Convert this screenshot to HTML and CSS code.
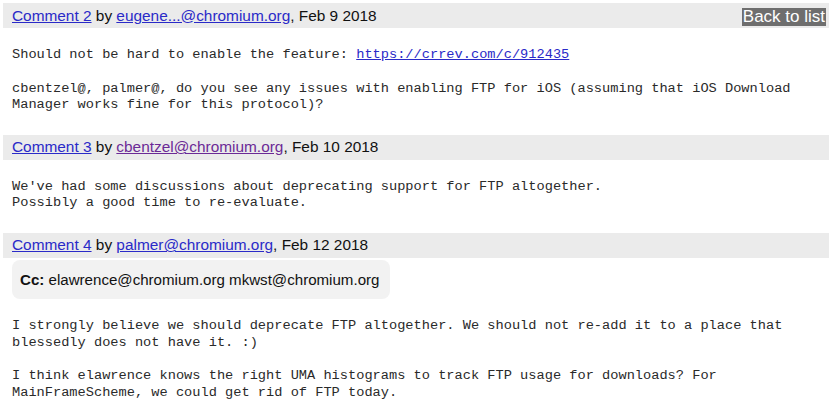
FILE: index.html
```html
<!DOCTYPE html>
<html>
<head>
<meta charset="utf-8">
<link rel="stylesheet" href="styles.css">
</head>
<body>
<div class="thread">
  <div class="comment">
    <div class="header">
      <div class="meta"><a class="link" href="#c2">Comment 2</a> by <a class="link" href="#u1">eugene...@chromium.org</a>, Feb 9 2018</div>
      <a class="back" href="#list">Back to list</a>
    </div>
    <pre class="body">Should not be hard to enable the feature: <a class="code-link" href="#crrev">https://crrev.com/c/912435</a>

cbentzel@, palmer@, do you see any issues with enabling FTP for iOS (assuming that iOS Download
Manager works fine for this protocol)?</pre>
  </div>
  <div class="comment">
    <div class="header">
      <div class="meta"><a class="link" href="#c3">Comment 3</a> by <a class="link visited" href="#u2">cbentzel@chromium.org</a>, Feb 10 2018</div>
    </div>
    <pre class="body">We've had some discussions about deprecating support for FTP altogether.
Possibly a good time to re-evaluate.</pre>
  </div>
  <div class="comment">
    <div class="header">
      <div class="meta"><a class="link" href="#c4">Comment 4</a> by <a class="link" href="#u3">palmer@chromium.org</a>, Feb 12 2018</div>
    </div>
    <div class="cc"><b>Cc:</b> elawrence@chromium.org mkwst@chromium.org</div>
    <pre class="body">I strongly believe we should deprecate FTP altogether. We should not re-add it to a place that
blessedly does not have it. :)

I think elawrence knows the right UMA histograms to track FTP usage for downloads? For
MainFrameScheme, we could get rid of FTP today.</pre>
  </div>
</div>
</body>
</html>
```
FILE: styles.css
```css
html, body {
  margin: 0;
  padding: 0;
  background: #ffffff;
}

.thread {
  padding: 3px 0 0 3px;
}

.header {
  display: flex;
  justify-content: space-between;
  align-items: center;
  background: #ebebeb;
  height: 25px;
  padding: 0 3px 0 9px;
  font-family: "Liberation Sans", Arial, sans-serif;
  font-size: 15.4px;
  color: #111;
}

.link {
  color: #2a2ac8;
  text-decoration: underline;
}

.link.visited {
  color: #6b2a96;
}

.back {
  background: #6e6e6e;
  color: #ffffff;
  text-decoration: none;
  font-size: 17px;
  line-height: 18px;
  padding: 0 1px;
  margin-top: 3px;
}

.body {
  margin: 0;
  padding: 19px 9px 20.5px 9px;
  font-family: "Liberation Mono", "DejaVu Sans Mono", monospace;
  font-size: 13.67px;
  line-height: 16.8px;
  color: #2a2a2a;
  white-space: pre;
}

.code-link {
  color: #2a2ac8;
}

.cc {
  margin: 2px 0 0 9px;
  width: 362px;
  background: #f2f2f2;
  border-radius: 8px;
  padding: 0 8px;
  height: 39px;
  line-height: 40px;
  font-family: "Liberation Sans", Arial, sans-serif;
  font-size: 15.1px;
  color: #111;
  white-space: nowrap;
}
```
